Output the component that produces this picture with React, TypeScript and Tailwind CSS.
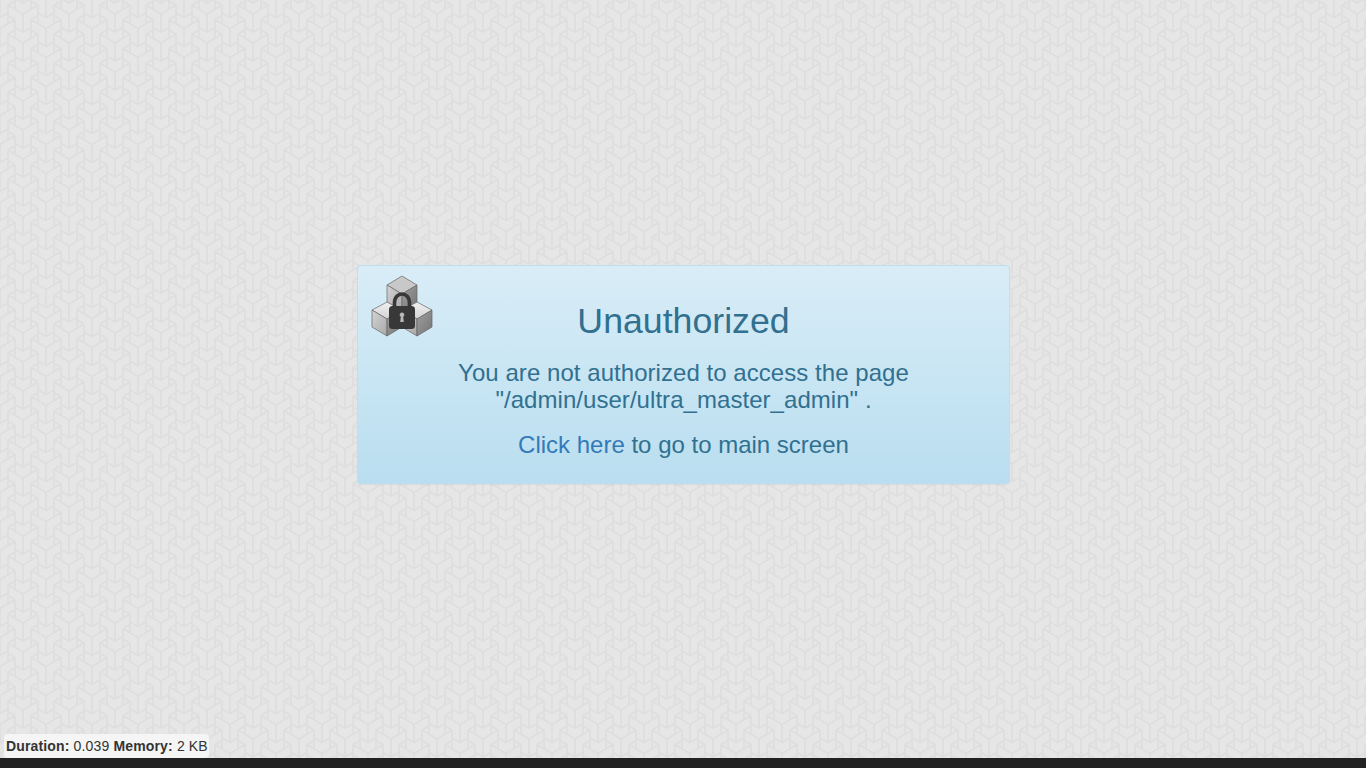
const CubeLock = () => (
  <svg width="60" height="60" viewBox="0 0 60 60" className="absolute left-[14px] top-[10px] overflow-visible">
    <defs>
      <linearGradient id="faceTop" x1="0" y1="0" x2="0" y2="1">
        <stop offset="0" stopColor="#f0f0f0" />
        <stop offset="1" stopColor="#d4d4d4" />
      </linearGradient>
      <linearGradient id="faceLeft" x1="0" y1="0" x2="1" y2="1">
        <stop offset="0" stopColor="#d4d4d4" />
        <stop offset="1" stopColor="#a8a8a8" />
      </linearGradient>
      <linearGradient id="faceRight" x1="0" y1="0" x2="1" y2="1">
        <stop offset="0" stopColor="#a0a0a0" />
        <stop offset="1" stopColor="#747474" />
      </linearGradient>
    </defs>
    <g stroke="#666" strokeWidth="0.7" strokeLinejoin="round">
      <path d="M30 0 45 9 30 18 15 9Z" fill="#c8c8c8" />
      <path d="M15 9 30 18 30 36 15 26Z" fill="url(#faceLeft)" />
      <path d="M45 9 30 18 30 36 45 26Z" fill="url(#faceRight)" />
      <path d="M15 26 30 34 15 43 0 34Z" fill="url(#faceTop)" />
      <path d="M0 34 15 43 15 60 0 51Z" fill="url(#faceLeft)" />
      <path d="M30 34 15 43 15 60 30 51Z" fill="url(#faceRight)" />
      <path d="M45 26 60 34 45 43 30 34Z" fill="url(#faceTop)" />
      <path d="M30 34 45 43 45 60 30 51Z" fill="url(#faceLeft)" />
      <path d="M60 34 45 43 45 60 60 51Z" fill="url(#faceRight)" />
    </g>
    <path d="M22.500 32V27C22.500 15 37.500 15 37.500 27V32" fill="none" stroke="#383838" strokeWidth="3.6" />
    <rect x="17" y="30" width="26" height="23" rx="3.5" fill="#383838" />
    <path d="M30 36.500a2.300 2.300 0 0 1 1.200 4.300L31.800 46H28.200L28.800 40.800A2.300 2.300 0 0 1 30 36.500Z" fill="#b8b8b8" />
  </svg>
);

// centres of every Y block that touches one 46x29 tile
const blockCentres = [
  [23, 14],
  [0, 28.5],
  [46, 28.5],
  [0, -0.5],
  [46, -0.5],
  [23, 43],
  [23, -15],
];

// tiled Y blocks behind the whole page
const PatternBackground = () => (
  <svg className="absolute inset-0 h-full w-full" aria-hidden="true">
    <defs>
      <pattern id="blocks" x="0" y="0" width="46" height="29" patternUnits="userSpaceOnUse">
        {blockCentres.map(([x, y]) => (
          <path
            key={`${x}-${y}`}
            transform={`translate(${x} ${y})`}
            d="M-15 -9 0 0 15 -9M0 0V18M-15 -9V10M15 -9V10M-8 13.500 0 18 8 13.500M-15 -9 -8 -13M15 -9 8 -13"
            fill="none"
            stroke="#dedede"
            strokeWidth="1.7"
          />
        ))}
      </pattern>
    </defs>
    <rect width="100%" height="100%" fill="url(#blocks)" />
  </svg>
);

export default function App() {
  return (
    <div className="relative flex min-h-screen flex-col overflow-hidden bg-[#e6e6e6] font-['Liberation_Sans',Arial,sans-serif]">
      <PatternBackground />

      <main className="relative flex flex-1 items-center justify-center pb-[9px] pl-px">
        <div className="relative flex h-[219px] w-[653px] flex-col items-center rounded border border-[#bcdff1] bg-gradient-to-b from-[#d9edf7] to-[#b9def0] pt-[33px] text-center text-[#31708f] shadow-[0_1px_1px_rgba(0,0,0,0.05)]">
          <CubeLock />
          <h1 className="text-[35.7px] leading-[44px]">Unauthorized</h1>
          <p className="mt-[16px] text-[24px] leading-[27px] tracking-[0.05px]">
            You are not authorized to access the page
            <br />
            "/admin/user/ultra_master_admin" .
          </p>
          <p className="mt-[18px] text-[24px] leading-[27px]">
            <a href="#" className="text-[#337ab7]">Click here</a> to go to main screen
          </p>
        </div>
      </main>

      <footer className="relative h-[10px] shrink-0 bg-[#222222]" />

      <div className="absolute bottom-[10px] left-[4px] flex h-[24px] w-[205px] items-center rounded bg-[#f5f5f5] px-[2px] text-[14px] tracking-[0.15px] whitespace-nowrap text-[#333333]">
        <span><b>Duration:</b> 0.039 <b>Memory:</b> 2 KB</span>
      </div>
    </div>
  );
}
